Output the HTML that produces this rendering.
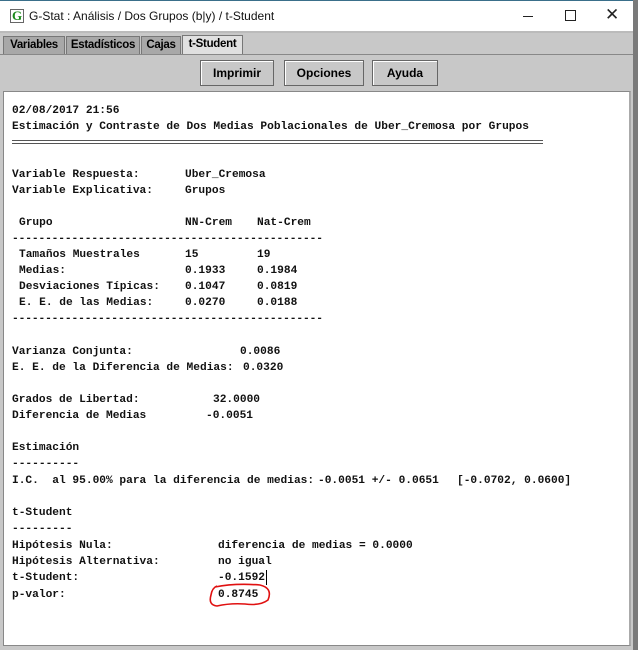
<!DOCTYPE html><html><head><meta charset="utf-8"><style>
body{margin:0;width:638px;height:650px;overflow:hidden;background:#c8c8c8;position:relative;font-family:"Liberation Sans",sans-serif}
.abs{position:absolute}
#title{left:0;top:0;width:633px;height:31px;background:#fff;border-top:1px solid #3a6f8a}
#side{left:633px;top:0;width:5px;height:650px;background:#7a7a7a}
.tab{position:absolute;top:36px;height:17px;border:1px solid #777;border-bottom:none;background:#a8a8a8;font:bold 11.5px "Liberation Sans",sans-serif;line-height:17px;text-align:center;letter-spacing:-0.3px}
.btn{position:absolute;top:60px;height:24px;border:1px solid #666;box-shadow:inset 1px 1px #fff;background:#c8c8c8;font:bold 12px "Liberation Sans",sans-serif;text-align:center;line-height:24px}
#panel{left:3px;top:91px;width:625px;height:553px;background:#fff;border:1px solid #888;border-right:2px solid #aaa}
.t{position:absolute;font:bold 11.2px "Liberation Mono",monospace;white-space:pre;color:#111;line-height:14px}
</style></head><body>
<div id="side" class="abs"></div>
<div id="title" class="abs">
<div class="abs" style="left:10px;top:8px;width:12px;height:12px;border:1px solid #666;color:#1a8a1a;font:bold 13px 'Liberation Serif',serif;line-height:12px;text-align:center">G</div>
<div class="abs" style="left:29px;top:8px;font-size:12px;color:#111">G-Stat : Análisis / Dos Grupos (b|y) / t-Student</div>
<div class="abs" style="left:523px;top:15px;width:10px;height:1px;background:#222"></div>
<div class="abs" style="left:565px;top:9px;width:9px;height:9px;border:1px solid #222"></div>
<div class="abs" style="left:605px;top:4px;font-size:17px;color:#222">✕</div>
</div>
<div class="abs" style="left:0;top:31px;width:633px;height:2px;background:#bbb"></div>
<div class="tab" style="left:3px;width:60px">Variables</div>
<div class="tab" style="left:66px;width:72px">Estadísticos</div>
<div class="tab" style="left:141px;width:38px">Cajas</div>
<div class="tab" style="left:182px;width:59px;background:#e0e0e0;top:35px;height:19px">t-Student</div>
<div class="abs" style="left:0;top:54px;width:633px;height:1px;background:#888"></div>
<div class="btn" style="left:200px;width:72px">Imprimir</div>
<div class="btn" style="left:284px;width:78px">Opciones</div>
<div class="btn" style="left:372px;width:64px">Ayuda</div>
<div id="panel" class="abs"></div>
<div class="t" style="left:12px;top:104px">02/08/2017 21:56</div>
<div class="t" style="left:12px;top:120px">Estimación y Contraste de Dos Medias Poblacionales de Uber_Cremosa por Grupos</div>
<div class="abs" style="left:12px;top:140px;width:531px;height:2px;border-top:1px solid #555;border-bottom:1px solid #555"></div>
<div class="t" style="left:12px;top:168px">Variable Respuesta:</div><div class="t" style="left:185px;top:168px">Uber_Cremosa</div>
<div class="t" style="left:12px;top:184px">Variable Explicativa:</div><div class="t" style="left:185px;top:184px">Grupos</div>
<div class="t" style="left:19px;top:216px">Grupo</div><div class="t" style="left:185px;top:216px">NN-Crem</div><div class="t" style="left:257px;top:216px">Nat-Crem</div>
<div class="t" style="left:12px;top:232px;letter-spacing:-0.1px">-----------------------------------------------</div>
<div class="t" style="left:19px;top:248px">Tamaños Muestrales</div><div class="t" style="left:185px;top:248px">15</div><div class="t" style="left:257px;top:248px">19</div>
<div class="t" style="left:19px;top:264px">Medias:</div><div class="t" style="left:185px;top:264px">0.1933</div><div class="t" style="left:257px;top:264px">0.1984</div>
<div class="t" style="left:19px;top:280px">Desviaciones Típicas:</div><div class="t" style="left:185px;top:280px">0.1047</div><div class="t" style="left:257px;top:280px">0.0819</div>
<div class="t" style="left:19px;top:296px">E. E. de las Medias:</div><div class="t" style="left:185px;top:296px">0.0270</div><div class="t" style="left:257px;top:296px">0.0188</div>
<div class="t" style="left:12px;top:312px;letter-spacing:-0.1px">-----------------------------------------------</div>
<div class="t" style="left:12px;top:345px">Varianza Conjunta:</div><div class="t" style="left:240px;top:345px">0.0086</div>
<div class="t" style="left:12px;top:361px">E. E. de la Diferencia de Medias:</div><div class="t" style="left:243px;top:361px">0.0320</div>
<div class="t" style="left:12px;top:393px">Grados de Libertad:</div><div class="t" style="left:213px;top:393px">32.0000</div>
<div class="t" style="left:12px;top:409px">Diferencia de Medias</div><div class="t" style="left:206px;top:409px">-0.0051</div>
<div class="t" style="left:12px;top:441px">Estimación</div>
<div class="t" style="left:12px;top:457px">----------</div>
<div class="t" style="left:12px;top:474px">I.C.  al 95.00% para la diferencia de medias:</div><div class="t" style="left:318px;top:474px">-0.0051 +/- 0.0651</div><div class="t" style="left:457px;top:474px">[-0.0702, 0.0600]</div>
<div class="t" style="left:12px;top:506px">t-Student</div>
<div class="t" style="left:12px;top:522px">---------</div>
<div class="t" style="left:12px;top:539px">Hipótesis Nula:</div><div class="t" style="left:218px;top:539px">diferencia de medias = 0.0000</div>
<div class="t" style="left:12px;top:555px">Hipótesis Alternativa:</div><div class="t" style="left:218px;top:555px">no igual</div>
<div class="t" style="left:12px;top:571px">t-Student:</div><div class="t" style="left:218px;top:571px">-0.1592</div>
<div class="abs" style="left:266px;top:570px;width:1px;height:15px;background:#000"></div>
<div class="t" style="left:12px;top:588px">p-valor:</div><div class="t" style="left:218px;top:588px">0.8745</div>
<svg class="abs" style="left:205px;top:580px" width="70" height="30"><path d="M10 7 Q30 3 55 5 Q68 8 63 20 Q55 26 40 24 Q25 23 12 26 Q3 25 6 15 Q7 8 12 6" fill="none" stroke="#e01010" stroke-width="1.6"/></svg>
</body></html>
